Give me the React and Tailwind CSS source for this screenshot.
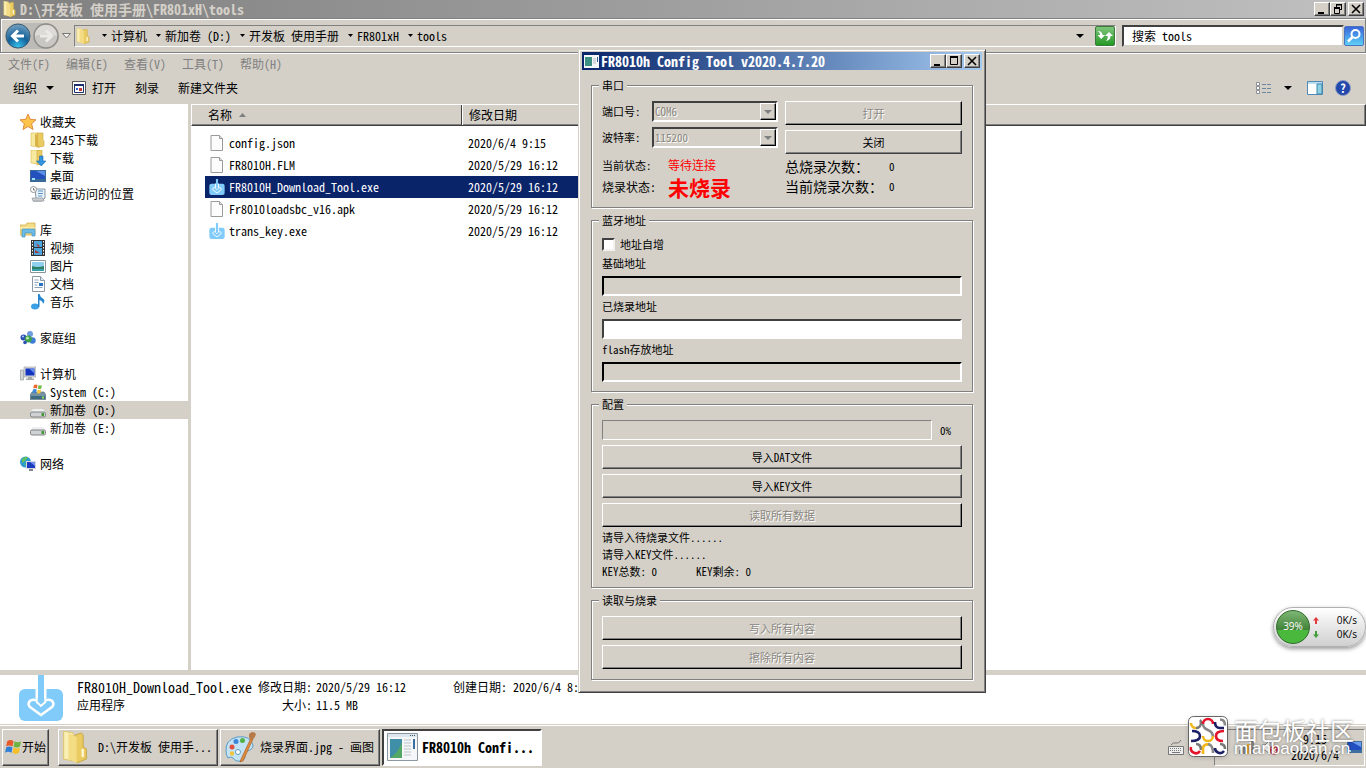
const raised =
  "border border-t-white border-l-white border-r-[#404040] border-b-[#404040] shadow-[inset_-1px_-1px_0_#808080] bg-[#d4d0c8]";
const raisedOff =
  "border border-t-white border-l-white border-r-black border-b-black shadow-[inset_-1px_-1px_0_#808080] bg-[#d4d0c8] text-[#8a8780]";
const sunken =
  "border border-t-[#808080] border-l-[#808080] border-r-white border-b-white";

function Arrow({ className = "" }) {
  return (
    <svg width="8" height="4" viewBox="0 0 8 4" className={`shrink-0 ${className}`}>
      <path d="M0 0h8L4 4z" fill="currentColor" />
    </svg>
  );
}

function FolderIcon({ className }) {
  return (
    <svg viewBox="0 0 16 16" preserveAspectRatio="none" className={className}>
      <path d="M1 0l6 1v14l-6-1z" fill="#f9eeb4" stroke="#dcc262" strokeWidth=".5" />
      <path d="M8 2l4-1 1 1v6l2 1v5l-6 2-1-1z" fill="#e9cb62" stroke="#c9a43c" strokeWidth=".5" />
      <path d="M4 1l5 2v13l-5-2z" fill="#f3dc83" />
      <path d="M12 9h1.500v4h-1.500z" fill="#fff7cf" />
    </svg>
  );
}

function DownloadAppIcon({ className }) {
  return (
    <svg viewBox="0 0 44 46" className={className}>
      <rect x="0" y="14" width="44" height="32" rx="6" fill="#80cbf9" />
      <path d="M16.500 13h11v10h-11z" fill="#fff" />
      <path d="M19 0h6v29h-6z" fill="#80cbf9" />
      <path
        d="M16 25c-6-1-8 4-5 7l11 8 11-8c3-3 1-8-5-7"
        fill="none"
        stroke="#fff"
        strokeWidth="2.500"
        strokeLinecap="round"
      />
      <path d="M18 25l4 5 4-5" fill="#80cbf9" />
      <path d="M17.700 22v5l4.300 4 4.300-4v-5" fill="none" stroke="#fff" strokeWidth="2" />
    </svg>
  );
}

function WindowsFlag({ className }) {
  return (
    <svg viewBox="0 0 16 16" className={className}>
      <path d="M3 2q3-2 6 0L8 7Q5 5 2 7z" fill="#e8592b" />
      <path d="M10 2q3 2 6 0l-1 5q-3 2-6 0z" fill="#6cb33f" />
      <path d="M2 8q3-2 6 0l-1 5q-3-2-6 0z" fill="#2f7fd6" />
      <path d="M9 8q3 2 6 0l-1 5q-3 2-6 0z" fill="#f5bf27" />
    </svg>
  );
}

const icons = {
  star: (
    <path d="M8 0l2.300 5.300 5.700.5-4.300 3.900 1.300 5.800L8 12.500l-5 3 1.300-5.800L0 5.800l5.700-.5z" fill="#fcc44c" stroke="#d9772a" strokeWidth=".8" />
  ),
  folder: (
    <>
      <path d="M1 1h7v14l-7-1z" fill="#f7e9a0" stroke="#d8b84e" strokeWidth=".6" />
      <path d="M7 1h6v7l1 1v5l-6 1.500z" fill="#e9cb62" stroke="#c9a43c" strokeWidth=".6" />
      <path d="M5 2l3 1v12l-3-1z" fill="#d8b348" />
    </>
  ),
  download: (
    <>
      <path d="M1 0h7v14l-7-1z" fill="#f7e9a0" stroke="#d8b84e" strokeWidth=".6" />
      <path d="M7 0h5v14l-5 1z" fill="#e9cb62" stroke="#c9a43c" strokeWidth=".6" />
      <path d="M9.500 6h3.500v5h3l-4.700 5L6.500 11h3z" fill="#3295e0" stroke="#1c66ad" strokeWidth=".6" />
    </>
  ),
  desktop: (
    <>
      <rect x="0" y="2" width="16" height="12" fill="#3a6a98" />
      <path d="M1 3h14v8H1z" fill="#2450bd" />
      <path d="M6 3h9v5z" fill="#5b8ce6" />
      <path d="M2 10h3v2H2z" fill="#9fe0ff" />
    </>
  ),
  recent: (
    <>
      <path d="M5 3h10v9l-3 3H3l3-3z" fill="#e8f1f8" stroke="#8897a3" />
      <path d="M8 5h5M8 7.500h5M8 10h4" stroke="#5b95c8" />
      <path d="M2 12h11l1 3H3z" fill="#c9ced2" stroke="#8a8f93" strokeWidth=".6" />
      <circle cx="3.500" cy="3.500" r="3" fill="#fff" stroke="#8b9296" />
      <path d="M3.500 2v2H5" stroke="#555" fill="none" strokeWidth=".8" />
    </>
  ),
  library: (
    <>
      <path d="M0 3h6l1-2h8v12H0z" fill="#f2dc84" stroke="#cba944" strokeWidth=".7" />
      <path d="M0 6h15" stroke="#fff6c9" />
      <path d="M2 8q0-1 1-1h11q1 0 1 1v6h-3v-3H5v4H2z" fill="#6bbde8" stroke="#3b88bb" strokeWidth=".6" />
    </>
  ),
  video: (
    <>
      <path d="M1 0h14v16H1z" fill="#333" />
      <path d="M4 1h8v6H4zM4 8h8v7H4z" fill="#4ea6df" />
      <path d="M6 3l4 3-2 1zM5 10l5 3h-5z" fill="#a4413d" />
      <path d="M2.500 1v15M13.500 1v15" stroke="#fff" strokeDasharray="1.500 1.500" />
    </>
  ),
  picture: (
    <>
      <path d="M.5 2.500h15v12H.5z" fill="#fff" stroke="#8a959c" />
      <path d="M2 4h12v9H2z" fill="#8fd0ee" />
      <path d="M2 8q5 2 12 0v5H2z" fill="#2d8068" />
      <path d="M2 11h12v2H2z" fill="#3aa0a8" />
    </>
  ),
  document: (
    <>
      <path d="M2.500.5h8l4 4v11h-12z" fill="#fff" stroke="#8b98a3" />
      <path d="M10.500.5v4h4" fill="#dfe6ec" stroke="#8b98a3" />
      <path d="M4.500 4h4M4.500 6.500h4M4.500 9h3M4.500 11.500h8" stroke="#8ba3b8" />
      <path d="M9 7h4v3H9z" fill="#2773c5" />
    </>
  ),
  music: (
    <>
      <ellipse cx="5" cy="12.500" rx="4" ry="3" fill="#3aa0e6" />
      <path d="M8 0h1.500q.5 3 4 5 2 2-.5 5 0-3-3.500-4v7H8z" fill="#2585cf" />
    </>
  ),
  home: (
    <>
      <circle cx="10" cy="4" r="3" fill="#6d9be0" />
      <circle cx="3.500" cy="7.500" r="3" fill="#2c4fb4" />
      <circle cx="12.500" cy="10.500" r="3.200" fill="#3e7fd5" />
      <circle cx="8.300" cy="9" r="3.600" fill="#3fa14c" />
      <circle cx="7.500" cy="8" r="1.500" fill="#b9eaa8" />
      <circle cx="3" cy="6.500" r="1" fill="#b5d2ff" />
      <circle cx="5" cy="12.500" r="1.800" fill="#2c4fb4" />
    </>
  ),
  computer: (
    <>
      <path d="M.5 4h3v10h-3z" fill="#d2d5d6" stroke="#8b8f90" strokeWidth=".6" />
      <path d="M4 1h12v10H4z" fill="#d9dadb" stroke="#9b9c9d" strokeWidth=".6" />
      <path d="M5.500 2.500h9v7h-9z" fill="#1334c0" />
      <path d="M9 2.500h5.500v5z" fill="#678be8" />
      <path d="M8 11h4v1.500H14V14H6v-1.500h2z" fill="#a6a9aa" />
    </>
  ),
  system: (
    <>
      <path d="M2 8h12l2 3v4.500H0V11z" fill="#7593a3" stroke="#526c79" strokeWidth=".6" />
      <path d="M1 12h14v3H1z" fill="#3d6c82" />
      <path d="M12 12.500h2v2h-2z" fill="#8be25e" />
      <path d="M4 1q2-1 3.500 0L7 4.500Q5 3.500 3.200 4.500z" fill="#ed6a34" />
      <path d="M8.500 1q2 1 3.500 0l-.8 3.500q-1.700 1-3.200 0z" fill="#6fbb42" />
      <path d="M3 5.500q2-1 3.700 0L6 9Q4 8 2.200 9z" fill="#3a8ada" />
      <path d="M7.700 5.500q2 1 3.500 0L10.500 9q-2 1-3.500 0z" fill="#f8c83c" />
    </>
  ),
  drive: (
    <>
      <path d="M3 7h10l3 3.500H0z" fill="#eeeff0" />
      <rect x=".5" y="10" width="15" height="5" rx="1.500" fill="#cfd1d2" stroke="#808385" />
      <path d="M11.500 11h2.500v3h-2.500z" fill="#3f9a33" />
    </>
  ),
  network: (
    <>
      <circle cx="5.500" cy="6" r="5.500" fill="#2d9bd0" />
      <path d="M2 3q3-3 6-2Q6 5 2 7zM4 8l4-1v4z" fill="#60bf5e" />
      <path d="M6 5h10v8H6z" fill="#d6dade" />
      <path d="M7 6h8v6H7z" fill="#1c3cc0" />
      <path d="M10 6h5v4z" fill="#7092ef" />
      <path d="M9 13h4v2H9z" fill="#7d8790" />
    </>
  ),
};

function Icon({ name }) {
  return (
    <svg viewBox="0 0 16 16" className="size-4 shrink-0">
      {icons[name]}
    </svg>
  );
}

const tree = [
  { name: "收藏夹", icon: "star", items: [["folder", "2345下载"], ["download", "下载"], ["desktop", "桌面"], ["recent", "最近访问的位置"]] },
  { name: "库", icon: "library", items: [["video", "视频"], ["picture", "图片"], ["document", "文档"], ["music", "音乐"]] },
  { name: "家庭组", icon: "home", items: [] },
  { name: "计算机", icon: "computer", items: [["system", "System (C:)"], ["drive", "新加卷 (D:)"], ["drive", "新加卷 (E:)"]] },
  { name: "网络", icon: "network", items: [] },
];

const files = [
  { name: "config.json", date: "2020/6/4 9:15" },
  { name: "FR8010H.FLM", date: "2020/5/29 16:12" },
  { name: "FR8010H_Download_Tool.exe", date: "2020/5/29 16:12", app: true, selected: true },
  { name: "Fr8010loadsbc_v16.apk", date: "2020/5/29 16:12" },
  { name: "trans_key.exe", date: "2020/5/29 16:12", app: true },
];

function WindowButtons({ restore }) {
  const btn = `flex h-[14px] w-4 items-center justify-center ${raised}`;
  return (
    <div className="flex">
      <button aria-label="最小化" className={btn}>
        <svg width="10" height="10"><path d="M1 8h6v2H1z" /></svg>
      </button>
      <button aria-label="最大化" className={btn}>
        <svg width="10" height="10" fill="none" stroke="#000">
          {restore ? (
            <path d="M3 1h6M3.500 0v3M3 .5h6M8.500 0v6M6 5.500h3M1 3.500h6M1 4.500h6M1.500 3v6.500h5V3" />
          ) : (
            <path d="M1 1.500h8M1 .5h8M1.500 0v8.500h7V0" />
          )}
        </svg>
      </button>
      <button aria-label="关闭" className={`ml-[2px] ${btn}`}>
        <svg width="10" height="10" stroke="#000" strokeWidth="1.600"><path d="M1 1l8 8M9 1l-8 8" /></svg>
      </button>
    </div>
  );
}

function AddressBar() {
  const crumbs = ["计算机", "新加卷 (D:)", "开发板 使用手册", "FR801xH", "tools"];
  return (
    <div className="flex h-[35px] items-center border border-[#808080] pr-px pl-1 shadow-[inset_1px_1px_0_#fff,0_1px_0_#fff]">
      <div className="flex items-center rounded-full bg-[#bdbbb7]">
        <button aria-label="后退" className="size-[26px]">
          <svg viewBox="0 0 26 26">
            <defs>
              <radialGradient id="back" cx=".5" cy=".95" r=".9">
                <stop offset="0" stopColor="#37c3ee" />
                <stop offset=".5" stopColor="#126199" />
                <stop offset="1" stopColor="#6d9bbd" />
              </radialGradient>
            </defs>
            <circle cx="13" cy="13" r="12" fill="url(#back)" stroke="#3d5c73" />
            <path d="M19 13H8M13 7.500L7.500 13l5.500 5.500" fill="none" stroke="#fff" strokeWidth="3" />
          </svg>
        </button>
        <button aria-label="前进" className="ml-[2px] size-[26px]">
          <svg viewBox="0 0 26 26">
            <circle cx="13" cy="13" r="12" fill="#c9c7c3" stroke="#8e8d8a" strokeWidth="1.500" />
            <path d="M2 13a11 11 0 0 1 22 0q-11-4-22 0z" fill="#dddbd8" />
            <path d="M7 13h11M13 7.500l5.500 5.500-5.500 5.500" fill="none" stroke="#eceae7" strokeWidth="3" />
          </svg>
        </button>
      </div>
      <button aria-label="最近的页面" className="flex w-[14px] justify-center">
        <svg width="9" height="6"><path d="M.5.5h8L4.500 5z" fill="#f0efec" stroke="#777" /></svg>
      </button>
      <div className={`ml-px flex h-[22px] flex-1 items-center pl-px ${sunken}`}>
        <FolderIcon className="mr-[3px] h-4 w-[14px]" />
        {crumbs.map((c) => (
          <a key={c} href="#" className="ml-[9px] flex items-center gap-1">
            <svg width="5" height="3" className="shrink-0"><path d="M0 0h5L2.500 3z" /></svg>
            {c}
          </a>
        ))}
        <Arrow className="mr-[11px] ml-auto" />
        <button aria-label="刷新" className="size-5 rounded-xs border border-[#3b7a3a] bg-linear-to-b from-[#7cc57a] to-[#1f9a22]">
          <svg viewBox="0 0 18 18" className="size-full">
            <path d="M1.500 8L5.500 4l3.500 4H6.500q0 3 2.500 4-4.500 0-5-4z" fill="#fff" transform="rotate(180 5.300 8)" />
            <path d="M9 9l4-4 4 4h-2.500q0 4.500-5 5 2.500-1.500 2.200-5z" fill="#fff" />
          </svg>
        </button>
      </div>
      <input
        aria-label="搜索"
        defaultValue="搜索 tools"
        className="ml-[6px] h-[22px] w-[222px] border-2 border-t-[#404040] border-r-[#d4d0c8] border-b-[#d4d0c8] border-l-[#404040] bg-white pl-2 outline-none"
      />
      <button aria-label="开始搜索" className="size-5 rounded-xs border border-[#4a72c0] bg-linear-to-b from-[#3b63d8] to-[#5fd0f6]">
        <svg viewBox="0 0 18 18" className="size-full" fill="none" stroke="#fff" strokeWidth="2">
          <circle cx="10.500" cy="7" r="4" />
          <path d="M7.500 10L3 14.500" strokeWidth="2.500" />
        </svg>
      </button>
    </div>
  );
}

function Toolbar() {
  return (
    <div className="flex h-[30px] items-center pr-[15px] pb-[2px] pl-[13px]">
      <button className="flex items-center gap-[9px]">组织 <Arrow /></button>
      <button className="ml-[18px] flex items-center gap-[6px]">
        <svg width="14" height="16" viewBox="0 0 14 16">
          <path d="M.5 1.500h13v13H.5z" fill="#fff" stroke="#555" />
          <path d="M2.500 4.500h9v8h-9z" fill="#fff" stroke="#1b2e6c" />
          <path d="M2 4h10v2H2z" fill="#1b2e6c" />
          <path d="M4 8h2v2H4z" fill="#2a5fd0" /><path d="M7 8h3v3H7z" fill="#c23a3a" />
        </svg>
        打开
      </button>
      <button className="ml-[19px]">刻录</button>
      <button className="ml-[19px]">新建文件夹</button>
      <button aria-label="更改视图" className="ml-auto flex items-center gap-3">
        <svg width="16" height="13" viewBox="0 0 16 13">
          <path d="M.5.500h3v3h-3zM.5 4.500h3v3h-3zM.5 8.500h3v3h-3z" fill="#fff" stroke="#8a8f96" />
          <path d="M6 2.500h4M11 2.500h4M6 6.500h4M11 6.500h4M6 10.500h4M11 10.500h4" stroke="#6b86a0" />
        </svg>
        <Arrow />
      </button>
      <button aria-label="预览窗格" className="ml-[15px]">
        <svg width="16" height="14" viewBox="0 0 16 14">
          <path d="M.5.500h15v13H.5z" fill="#fff" stroke="#4f89b4" />
          <path d="M1 1h14v2H1z" fill="#b9dcef" />
          <path d="M10 3h5v10h-5z" fill="#8fd0e4" stroke="#3a86ad" />
        </svg>
      </button>
      <button aria-label="帮助" className="ml-3 flex size-4 items-center justify-center rounded-full border border-[#8a98c0] bg-[#2347ad] text-xs font-bold text-white">
        ?
      </button>
    </div>
  );
}

function Sidebar() {
  return (
    <nav className="w-[188px] shrink-0 bg-white pt-[9px]">
      {tree.map((group) => (
        <div key={group.name} className="mb-[18px]">
          <a href="#" className="flex h-[18px] items-center gap-1 pl-5">
            <Icon name={group.icon} />
            {group.name}
          </a>
          {group.items.map(([icon, label]) => (
            <a
              key={label}
              href="#"
              className={`flex h-[18px] items-center gap-1 pl-[30px] ${label === "新加卷 (D:)" ? "bg-[#d4d0c8]" : ""}`}
            >
              <Icon name={icon} />
              {label}
            </a>
          ))}
        </div>
      ))}
    </nav>
  );
}

function FileList() {
  return (
    <main className="ml-[3px] flex-1 bg-white">
      <div className="flex h-[22px] items-center border border-t-white border-r-[#404040] border-b-[#404040] border-l-white bg-[#d4d0c8] shadow-[inset_-1px_-1px_0_#808080]">
        <div className="flex h-full w-[270px] items-center gap-[7px] border-r border-[#404040] pl-4">
          名称
          <svg width="7" height="4"><path d="M0 4h7L3.500 0z" fill="#808080" /></svg>
        </div>
        <div className="h-full border-l border-white pl-[6px] leading-5">修改日期</div>
      </div>
      <table className="mt-[6px] ml-[14px] border-collapse">
        <tbody>
          {files.map((f) => (
            <tr key={f.name} className={`h-[22px] ${f.selected ? "bg-[#0a246a] text-white" : ""}`}>
              <td className="w-[263px] p-0 pl-1">
                <span className="flex items-center gap-1">
                  {f.app ? (
                    <DownloadAppIcon className="size-4" />
                  ) : (
                    <svg width="16" height="16" viewBox="0 0 16 16">
                      <path d="M2 .5h8.500l3 3v12H2z" fill="#fcfcfc" stroke="#9a9a9a" />
                      <path d="M10.500.5v3h3" fill="#e4e4e4" stroke="#9a9a9a" />
                    </svg>
                  )}
                  {f.name}
                </span>
              </td>
              <td className="w-[140px] p-0">{f.date}</td>
            </tr>
          ))}
        </tbody>
      </table>
    </main>
  );
}

function DetailsPane() {
  return (
    <footer className="flex h-[55px] items-start border-t-[5px] border-b border-t-[#d4d0c8] border-b-[#d4d0c8] bg-white pl-[19px] leading-[18px]">
      <DownloadAppIcon className="h-[46px] w-11" />
      <div className="ml-[14px] w-[181px] pt-[3px]">
        <div className="text-sm leading-[18px]">FR8010H_Download_Tool.exe</div>
        <div>应用程序</div>
      </div>
      <dl className="grid grid-cols-[auto_auto] gap-x-1 pt-[3px]">
        <dt className="text-right">修改日期:</dt>
        <dd>2020/5/29 16:12</dd>
        <dt className="text-right">大小:</dt>
        <dd>11.5 MB</dd>
      </dl>
      <div className="ml-[47px] pt-[3px]">创建日期: 2020/6/4 8:54</div>
    </footer>
  );
}

function Group({ title, className = "", children }) {
  return (
    <fieldset className={`min-w-0 border border-[#808080] px-[10px] shadow-[1px_1px_0_#fff,inset_1px_1px_0_#fff] ${className}`}>
      <legend className="-ml-[3px] bg-[#d4d0c8] px-[3px] leading-[14px]">{title}</legend>
      {children}
    </fieldset>
  );
}

function DialogButton({ disabled, children }) {
  return (
    <button disabled={disabled} className={`block h-6 w-full ${disabled ? raisedOff : raised} ${disabled ? "[text-shadow:1px_1px_0_#fff]" : ""}`}>
      {children}
    </button>
  );
}

function DialogSelect({ label, value }) {
  return (
    <label className="flex h-[21px] items-center">
      <span className="w-[50px]">{label}</span>
      <span className="relative flex-1">
        <select disabled className="block h-[21px] w-full appearance-none border-2 border-t-[#404040] border-r-white border-b-white border-l-[#404040] bg-[#d4d0c8] pl-px text-[#8a8780] opacity-100 [text-shadow:1px_1px_0_#fff]">
          <option>{value}</option>
        </select>
        <span className={`absolute top-[2px] right-[2px] flex h-[17px] w-4 items-center justify-center text-[#808080] ${raisedOff}`}>
          <Arrow />
        </span>
      </span>
    </label>
  );
}

function AddressField({ label, disabled }) {
  return (
    <label className="block pt-[2px]">
      <span className="block pb-[5px] leading-4">{label}</span>
      <input
        disabled={disabled}
        className={`block h-5 w-full border-2 border-r-white border-b-white ${disabled ? "border-t-black border-l-black bg-[#d4d0c8]" : "border-t-[#404040] border-l-[#404040] bg-white"}`}
      />
    </label>
  );
}

function ConfigTool() {
  return (
    <section className="absolute top-[49px] left-[578px] w-[408px] border border-t-[#d4d0c8] border-r-[#404040] border-b-[#404040] border-l-[#d4d0c8] bg-[#d4d0c8] px-[3px] pt-[2px] pb-3 text-[11px] shadow-[inset_1px_1px_0_#fff,inset_-1px_-1px_0_#808080]">
      <header className="flex h-[18px] items-center bg-linear-to-r from-[#0a246a] to-[#a6caf0] pr-[2px] pl-[2px]">
        <svg width="15" height="13" viewBox="0 0 15 13">
          <path d="M0 0h15v13H0z" fill="#f4f6f7" />
          <path d="M1 2h7v9H1z" fill="#3c8f83" /><path d="M9 4h3M9 6h3M9 8h3" stroke="#b4bcc2" />
          <path d="M13 2h1v5h-1z" fill="#345e94" />
        </svg>
        <h2 className="mr-auto ml-[2px] text-sm leading-[18px] font-bold text-white">FR8010h Config Tool v2020.4.7.20</h2>
        <WindowButtons />
      </header>

      <div className="mx-[9px] mt-[8px]">
        <Group title="串口" className="h-[130px]">
          <div className="flex gap-[7px] pt-[9px]">
            <div className="w-44">
              <DialogSelect label="端口号:" value="COM6" />
              <div className="h-[5px]" />
              <DialogSelect label="波特率:" value="115200" />
              <div className="mt-[6px] flex h-[22px] items-center">
                <span className="w-[66px]">当前状态:</span>
                <span className="text-xs text-[#f00]">等待连接</span>
              </div>
              <div className="flex h-[22px] items-center text-xs">
                <span className="w-[66px]">烧录状态:</span>
                <span className="text-[21px] leading-[22px] font-bold text-[#f00]">未烧录</span>
              </div>
            </div>
            <div className="flex-1">
              <DialogButton disabled>打开</DialogButton>
              <div className="h-[5px]" />
              <DialogButton>关闭</DialogButton>
              <div className="mt-[2px] grid grid-cols-[104px_auto] items-center leading-5">
                <span className="text-sm leading-5">总烧录次数：</span>
                <span>0</span>
                <span className="text-sm leading-5">当前烧录次数：</span>
                <span>0</span>
              </div>
            </div>
          </div>
        </Group>

        <Group title="蓝牙地址" className="mt-[5px] h-[179px]">
          <label className="mt-[8px] flex h-[18px] items-center gap-[5px]">
            <input type="checkbox" className="size-[13px] appearance-none border-2 border-t-[#404040] border-r-[#f4f2ee] border-b-[#f4f2ee] border-l-[#404040] bg-white" />
            地址自增
          </label>
          <AddressField label="基础地址" disabled />
          <AddressField label="已烧录地址" />
          <AddressField label="flash存放地址" disabled />
        </Group>

        <Group title="配置" className="mt-[5px] h-[191px]">
          <div className="mt-[9px] flex items-center">
            <div role="progressbar" aria-label="配置" aria-valuenow={0} className={`h-5 flex-1 ${sunken}`} />
            <span className="w-[30px] pl-2">0%</span>
          </div>
          <div className="mt-[5px] space-y-[5px]">
            <DialogButton>导入DAT文件</DialogButton>
            <DialogButton>导入KEY文件</DialogButton>
            <DialogButton disabled>读取所有数据</DialogButton>
          </div>
          <div className="mt-[2px] leading-[17px]">
            <p>请导入待烧录文件......</p>
            <p>请导入KEY文件......</p>
            <p className="flex">
              <span className="w-[94px]">KEY总数: 0</span>
              <span>KEY剩余: 0</span>
            </p>
          </div>
        </Group>

        <Group title="读取与烧录" className="mt-[5px] h-[87px]">
          <div className="mt-[9px] space-y-[5px]">
            <DialogButton disabled>写入所有内容</DialogButton>
            <DialogButton disabled>擦除所有内容</DialogButton>
          </div>
        </Group>
      </div>
    </section>
  );
}

function SpeedBall() {
  return (
    <aside className="absolute top-[607px] right-0 flex h-10 w-[93px] items-center rounded-full border border-[#b0b0b0] bg-linear-to-b from-white to-[#d0d0d0] pl-[2px] font-['Open_Sans','Liberation_Sans',sans-serif] text-[10px] shadow-[0_2px_4px_#0006]">
      <div className="flex size-[34px] items-center justify-center rounded-full border border-[#2f6b2a] bg-linear-to-b from-[#7fb776] via-[#3f8236] via-60% to-[#4ab83c] to-60% text-white">
        39%
      </div>
      <div className="ml-[3px] flex-1 pr-2 leading-[14px]">
        {["#e23b3b", "#3f9e3a"].map((c, i) => (
          <div key={c} className="flex items-center justify-between">
            <svg width="6" height="7" viewBox="0 0 6 7" className={i ? "rotate-180" : ""}>
              <path d="M3 0l3 3.500H4V7H2V3.500H0z" fill={c} />
            </svg>
            0K/s
          </div>
        ))}
      </div>
    </aside>
  );
}

function TaskButton({ active, icon, children }) {
  return (
    <button
      className={`flex h-[37px] w-[160px] items-center gap-1 overflow-hidden pl-[3px] whitespace-nowrap ${
        active
          ? "border-2 border-t-[#404040] border-r-white border-b-white border-l-[#404040] bg-white text-sm font-bold"
          : raised
      }`}
    >
      {icon}
      {children}
    </button>
  );
}

function Taskbar() {
  return (
    <div className="flex h-[43px] items-center gap-[2px] border-t border-white bg-[#d4d0c8] pr-px pl-[2px]">
      <button className={`mr-[7px] flex h-[37px] w-[47px] items-center gap-px pl-px ${raised}`}>
        <WindowsFlag className="size-[17px]" />
        开始
      </button>
      <TaskButton icon={<FolderIcon className="mr-[6px] h-8 w-[26px]" />}>D:\开发板 使用手...</TaskButton>
      <TaskButton
        icon={
          <svg width="32" height="32" viewBox="0 0 32 32">
            <path d="M2 20Q1 9 13 6q13-2 16 8 0 5-6 6-3 1-2 6-1 5-8 4-3-1-4-3-2-2-5 0-2-3-2-7z" fill="#c3e2f3" stroke="#5b9cc4" />
            <circle cx="8" cy="16" r="2.500" fill="#e0503e" />
            <circle cx="12" cy="10.500" r="2.500" fill="#3a86d8" />
            <circle cx="18.500" cy="9.500" r="2.500" fill="#56b049" />
            <circle cx="8" cy="22.500" r="2.200" fill="#f2c53a" />
            <circle cx="14" cy="21" r="2.500" fill="#fff" stroke="#5b9cc4" />
            <path d="M27 7l2 1-10 22-3 1 1-3z" fill="#e08b3c" stroke="#a4581c" strokeWidth=".6" />
            <path d="M25 3q4-4 7 0-1 4-4 6l-3-2z" fill="#b77a49" />
          </svg>
        }
      >
        烧录界面.jpg - 画图
      </TaskButton>
      <TaskButton
        active
        icon={
          <svg width="31" height="28" viewBox="0 0 31 28">
            <path d="M.5.500h30v27H.5z" fill="#f4f6f8" stroke="#8d97a0" />
            <path d="M1 1h29v3H1z" fill="#dce6ee" /><path d="M23 2.500h6" stroke="#456" strokeDasharray="1 1" />
            <path d="M3 6h12v19H3z" fill="#3f8fa8" /><path d="M3 25Q11 20 15 9v16z" fill="#54a866" />
            <path d="M17 7h7M17 10h7M17 13h7M17 16h7M17 19h7M17 22h7" stroke="#bcc4ca" />
            <path d="M26 6h2v10h-2z" fill="#3c6da2" />
          </svg>
        }
      >
        FR8010h Confi...
      </TaskButton>

      <svg width="16" height="15" viewBox="0 0 16 15" className="ml-auto" fill="none" stroke="#777">
        <path d="M3 5q2-3 5-2t5-3" />
        <path d="M.5 6.500h15v8H.5z" fill="#eee" />
        <path d="M2 8.500h12M2 10.500h12" strokeDasharray="1 1" /><path d="M4 12.500h8" />
      </svg>
      <div className={`ml-7 flex h-[37px] w-[151px] items-center pl-6 ${sunken}`}>
        <svg width="15" height="14" viewBox="0 0 15 14">
          <path d="M0 10h3v4H0zM4 7h3v7H4z" fill="#8d8a85" /><path d="M8 4h3v10H8z" fill="#e6a92c" />
          <path d="M12 0h3v14h-3z" fill="#8d8a85" />
        </svg>
        <svg width="17" height="15" viewBox="0 0 17 15" className="ml-2">
          <path d="M0 5h3l5-5v14l-5-4H0z" fill="#fff" stroke="#888" />
          <circle cx="12" cy="10" r="4.500" fill="#c92f35" /><path d="M10 8l4 4M14 8l-4 4" stroke="#fff" strokeWidth="1.500" />
        </svg>
        <div className="ml-[11px] w-[50px] text-center leading-4">
          9:15
          <br />
          2020/6/4
        </div>
        <svg width="15" height="12" viewBox="0 0 15 12" className="ml-[7px]">
          <path d="M0 0h15v12H0z" fill="#3f6f9f" /><path d="M1 1h13v8H1z" fill="#2250c0" />
          <path d="M5 1h9v5z" fill="#6d9bee" /><path d="M1 9h3v2H1z" fill="#a7e6ff" />
        </svg>
      </div>
    </div>
  );
}

function SiteMark() {
  return (
    <div className="pointer-events-none absolute right-3 bottom-[10px] flex items-center gap-[5px]">
      <svg width="41" height="42" viewBox="0 0 41 42" className="drop-shadow-sm">
        <rect x=".5" y=".5" width="39" height="40" rx="5" fill="#fff" stroke="#666" />
        <g fill="none" strokeWidth="2.600">
          <path d="M3 7a5 5 0 0 0 5 5" stroke="#f2b81b" />
          <path d="M8 12a5 5 0 0 0 5-5q0-2-1-3" stroke="#777" />
          <path d="M15 8a5 5 0 0 1 10 0" stroke="#e3142a" />
          <path d="M15 8q0 4 5 6t5 7" stroke="#888" />
          <path d="M27 6q0 6 5 6h4" stroke="#1b1f63" />
          <path d="M32 3.500q5 0 5 6" stroke="#888" />
          <path d="M4 15q8 0 8 5t-9 5" stroke="#1b1f63" />
          <path d="M15 20a5 5 0 0 0 10 0" stroke="#f2b81b" />
          <path d="M36 15q-8 0-8 5t7 5" stroke="#e3142a" />
          <path d="M8 28q5 0 5 6" stroke="#777" />
          <path d="M3 31a5 5 0 0 0 9 4" stroke="#e3142a" />
          <path d="M15 38v-5a4 4 0 0 1 6-4" stroke="#f2b81b" />
          <path d="M20 28q5 1 5 9" stroke="#888" />
          <path d="M27 32a5 5 0 0 0 9 3" stroke="#1b1f63" />
          <path d="M32 28q5 0 5 5" stroke="#777" />
        </g>
      </svg>
      <div className="font-['Noto_Sans_CJK_SC',sans-serif] text-white [text-shadow:0_0_3px_#0008]">
        <div className="text-2xl leading-6">面包板社区</div>
        <div className="font-['Liberation_Sans',sans-serif] text-[17px] leading-[14px]">mianbaoban.cn</div>
      </div>
    </div>
  );
}

export default function App() {
  return (
    <div className="relative flex h-screen flex-col overflow-hidden bg-[#d4d0c8] font-['Noto_Sans_Mono_CJK_SC','Noto_Sans_CJK_SC',monospace] text-xs whitespace-nowrap text-black">
      <header className="flex h-[18px] shrink-0 items-center bg-linear-to-r from-[#808080] to-[#c0c0c0] pr-[2px] pl-[3px]">
        <FolderIcon className="h-4 w-[13px]" />
        <h1 className="mr-auto ml-1 text-sm leading-[18px] font-bold text-[#d4d0c8]">D:\开发板 使用手册\FR801xH\tools</h1>
        <WindowButtons restore />
      </header>
      <AddressBar />
      <div className="flex h-[21px] items-center gap-4 pl-2 text-[#808080]">
        {["文件(F)", "编辑(E)", "查看(V)", "工具(T)", "帮助(H)"].map((m) => (
          <button key={m}>{m}</button>
        ))}
      </div>
      <Toolbar />
      <div className="flex min-h-0 flex-1">
        <Sidebar />
        <FileList />
      </div>
      <DetailsPane />
      <Taskbar />
      <ConfigTool />
      <SpeedBall />
      <SiteMark />
    </div>
  );
}
